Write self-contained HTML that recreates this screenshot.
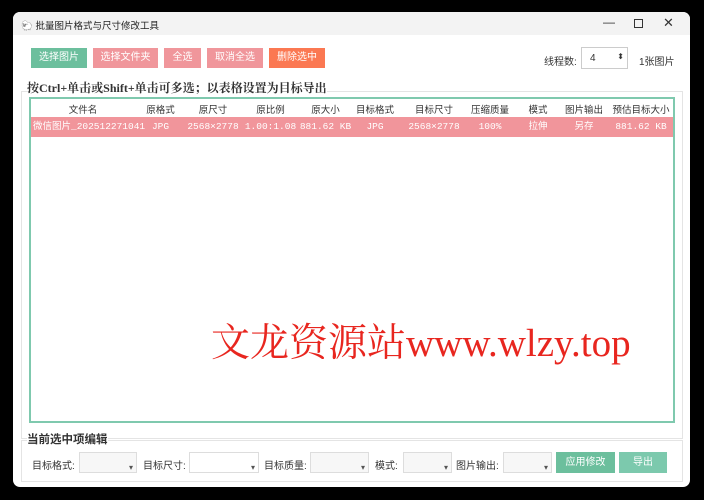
<!DOCTYPE html>
<html><head><meta charset="utf-8"><style>
*{margin:0;padding:0;box-sizing:border-box}
body{width:704px;height:500px;background:#000;position:relative;overflow:hidden;font-family:"Liberation Sans","Noto Sans CJK SC",sans-serif;font-size:10px;color:#333}
.win{position:absolute;left:13px;top:12px;width:677px;height:475px;background:#fff;border-radius:7px;overflow:hidden}
.title{position:absolute;left:0;top:0;width:100%;height:23px;background:#f3f3f3}
.title span{position:absolute;left:8px;top:6px;font-size:9.5px;color:#222}
.ab{position:absolute;color:#fff;font-size:10px;text-align:center;line-height:20px;height:20px}
.t{position:absolute;white-space:nowrap}
.box{position:absolute;border:1px solid #ddd}
.cell{position:absolute;text-align:center;white-space:nowrap;font-size:9.5px}
.row .cell{line-height:20px;top:105px}
.sel{position:absolute;height:21px;border:1px solid #ddd;background:#f7f7f7}
.sel:after{content:"▾";position:absolute;right:3px;bottom:0;font-size:8px;color:#555}
</style></head><body>
<div class="win">
<div class="title"><span>🐑 批量图片格式与尺寸修改工具</span>
<div class="t" style="left:590px;top:3px;font-size:12px">—</div>
<div class="t" style="left:621px;top:7px;width:9px;height:9px;border:1px solid #333"></div>
<div class="t" style="left:650px;top:3px;font-size:13px">✕</div></div>
<div class="ab" style="left:18px;top:36px;width:56px;background:#6cbf9d">选择图片</div>
<div class="ab" style="left:80px;top:36px;width:65px;background:#f0969b">选择文件夹</div>
<div class="ab" style="left:151px;top:36px;width:37px;background:#f0969b">全选</div>
<div class="ab" style="left:194px;top:36px;width:56px;background:#f0969b">取消全选</div>
<div class="ab" style="left:256px;top:36px;width:56px;background:#fb7852">删除选中</div>
<div class="t" style="left:531px;top:41px">线程数:</div>
<div class="t" style="left:568px;top:35px;width:47px;height:22px;border:1px solid #ccc"><span style="position:absolute;left:8px;top:5px">4</span><span style="position:absolute;right:3px;top:4px;font-size:8px">⬍</span></div>
<div class="t" style="left:626px;top:41px">1张图片</div>
<div class="box" style="left:8px;top:79px;width:662px;height:348px;border-color:#e4e4e4"></div>
<div class="t" style="left:14px;top:67px;font-size:12px;font-family:'Liberation Serif','Noto Serif CJK SC',serif;font-weight:bold;color:#333;background:#fff">按Ctrl+单击或Shift+单击可多选；以表格设置为目标导出</div>
<div class="box" style="left:16px;top:85px;width:646px;height:326px;border:2px solid #7fc9ae"></div>
<div style="position:absolute;left:18px;top:105px;width:642px;height:20px;background:#f1959b"></div>
<div class="cell" style="left:30px;top:90px;width:80px">文件名</div>
<div class="cell" style="left:125px;top:90px;width:45px">原格式</div>
<div class="cell" style="left:170px;top:90px;width:60px">原尺寸</div>
<div class="cell" style="left:230px;top:90px;width:55px">原比例</div>
<div class="cell" style="left:285px;top:90px;width:55px">原大小</div>
<div class="cell" style="left:336px;top:90px;width:52px">目标格式</div>
<div class="cell" style="left:390px;top:90px;width:62px">目标尺寸</div>
<div class="cell" style="left:452px;top:90px;width:50px">压缩质量</div>
<div class="cell" style="left:505px;top:90px;width:40px">模式</div>
<div class="cell" style="left:546px;top:90px;width:50px">图片输出</div>
<div class="cell" style="left:598px;top:90px;width:60px">预估目标大小</div>
<div class="row" style="color:#fff;font-family:'Liberation Mono','Noto Sans CJK SC',monospace;font-size:9px">
<div class="cell" style="left:20px;width:105px">微信图片_202512271041</div>
<div class="cell" style="left:125px;width:45px">JPG</div>
<div class="cell" style="left:170px;width:60px">2568×2778</div>
<div class="cell" style="left:230px;width:55px">1.00:1.08</div>
<div class="cell" style="left:285px;width:55px">881.62 KB</div>
<div class="cell" style="left:336px;width:52px">JPG</div>
<div class="cell" style="left:390px;width:62px">2568×2778</div>
<div class="cell" style="left:452px;width:50px">100%</div>
<div class="cell" style="left:505px;width:40px">拉伸</div>
<div class="cell" style="left:546px;width:50px">另存</div>
<div class="cell" style="left:598px;width:60px">881.62 KB</div></div>
<div class="t" style="left:198px;top:300px;font-size:39px;font-family:'Liberation Serif','Noto Serif CJK SC',serif;color:#e8261f">文龙资源站www.wlzy.top</div>
<div class="box" style="left:8px;top:428px;width:662px;height:42px;border-color:#e4e4e4"></div>
<div class="t" style="left:14px;top:419px;font-size:11.5px;font-weight:bold;background:#fff">当前选中项编辑</div>
<div class="t" style="left:19px;top:445px">目标格式:</div>
<div class="sel" style="left:66px;top:440px;width:58px"></div>
<div class="t" style="left:130px;top:445px">目标尺寸:</div>
<div class="sel" style="left:176px;top:440px;width:70px;background:#fff"></div>
<div class="t" style="left:251px;top:445px">目标质量:</div>
<div class="sel" style="left:297px;top:440px;width:59px"></div>
<div class="t" style="left:362px;top:445px">模式:</div>
<div class="sel" style="left:390px;top:440px;width:49px"></div>
<div class="t" style="left:443px;top:445px">图片输出:</div>
<div class="sel" style="left:490px;top:440px;width:49px"></div>
<div class="ab" style="left:543px;top:440px;width:59px;height:21px;line-height:21px;background:#6cbf9d">应用修改</div>
<div class="ab" style="left:606px;top:440px;width:48px;height:21px;line-height:21px;background:#7cc9ad">导出</div>
</div>
</body></html>
